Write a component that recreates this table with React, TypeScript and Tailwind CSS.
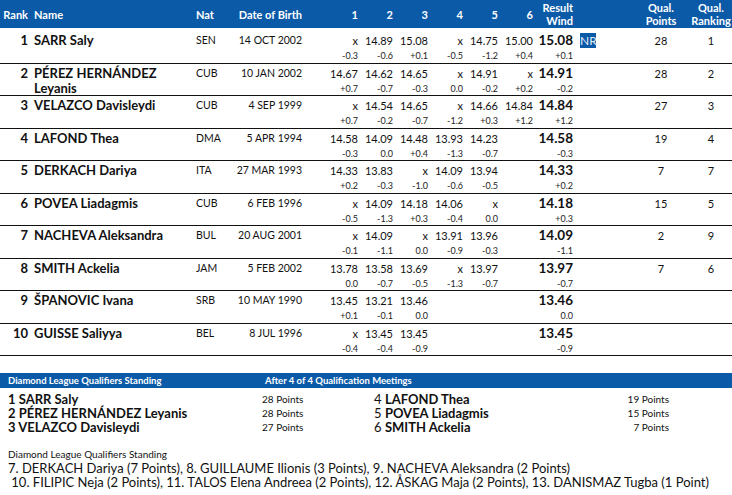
import React from "react";

type Row = {
  rank: number;
  name: string;
  nat: string;
  dob: string;
  marks: string[];
  winds: string[];
  result: string;
  wind: string;
  note?: string;
  points?: string;
  ranking?: string;
};

const rows: Row[] = [
  { rank: 1, name: "SARR Saly", nat: "SEN", dob: "14 OCT 2002", marks: ["x", "14.89", "15.08", "x", "14.75", "15.00"], winds: ["-0.3", "-0.6", "+0.1", "-0.5", "-1.2", "+0.4"], result: "15.08", wind: "+0.1", note: "NR", points: "28", ranking: "1" },
  { rank: 2, name: "PÉREZ HERNÁNDEZ Leyanis", nat: "CUB", dob: "10 JAN 2002", marks: ["14.67", "14.62", "14.65", "x", "14.91", "x"], winds: ["+0.7", "-0.7", "-0.3", "0.0", "-0.2", "+0.2"], result: "14.91", wind: "-0.2", points: "28", ranking: "2" },
  { rank: 3, name: "VELAZCO Davisleydi", nat: "CUB", dob: "4 SEP 1999", marks: ["x", "14.54", "14.65", "x", "14.66", "14.84"], winds: ["+0.7", "-0.2", "-0.7", "-1.2", "+0.3", "+1.2"], result: "14.84", wind: "+1.2", points: "27", ranking: "3" },
  { rank: 4, name: "LAFOND Thea", nat: "DMA", dob: "5 APR 1994", marks: ["14.58", "14.09", "14.48", "13.93", "14.23", ""], winds: ["-0.3", "0.0", "+0.4", "-1.3", "-0.7", ""], result: "14.58", wind: "-0.3", points: "19", ranking: "4" },
  { rank: 5, name: "DERKACH Dariya", nat: "ITA", dob: "27 MAR 1993", marks: ["14.33", "13.83", "x", "14.09", "13.94", ""], winds: ["+0.2", "-0.3", "-1.0", "-0.6", "-0.5", ""], result: "14.33", wind: "+0.2", points: "7", ranking: "7" },
  { rank: 6, name: "POVEA Liadagmis", nat: "CUB", dob: "6 FEB 1996", marks: ["x", "14.09", "14.18", "14.06", "x", ""], winds: ["-0.5", "-1.3", "+0.3", "-0.4", "0.0", ""], result: "14.18", wind: "+0.3", points: "15", ranking: "5" },
  { rank: 7, name: "NACHEVA Aleksandra", nat: "BUL", dob: "20 AUG 2001", marks: ["x", "14.09", "x", "13.91", "13.96", ""], winds: ["-0.1", "-1.1", "0.0", "-0.9", "-0.3", ""], result: "14.09", wind: "-1.1", points: "2", ranking: "9" },
  { rank: 8, name: "SMITH Ackelia", nat: "JAM", dob: "5 FEB 2002", marks: ["13.78", "13.58", "13.69", "x", "13.97", ""], winds: ["0.0", "-0.7", "-0.5", "-1.3", "-0.7", ""], result: "13.97", wind: "-0.7", points: "7", ranking: "6" },
  { rank: 9, name: "ŠPANOVIC Ivana", nat: "SRB", dob: "10 MAY 1990", marks: ["13.45", "13.21", "13.46", "", "", ""], winds: ["+0.1", "-0.1", "0.0", "", "", ""], result: "13.46", wind: "0.0" },
  { rank: 10, name: "GUISSE Saliyya", nat: "BEL", dob: "8 JUL 1996", marks: ["x", "13.45", "13.45", "", "", ""], winds: ["-0.4", "-0.4", "-0.9", "", "", ""], result: "13.45", wind: "-0.9" },
];

// widths of the six attempt columns
const markW = ["w-[56px]", "w-[35px]", "w-[35px]", "w-[35px]", "w-[35px]", "w-[35px]"];

const standingsLeft = [
  { n: "1", name: "SARR Saly", pts: "28 Points" },
  { n: "2", name: "PÉREZ HERNÁNDEZ Leyanis", pts: "28 Points" },
  { n: "3", name: "VELAZCO Davisleydi", pts: "27 Points" },
];
const standingsRight = [
  { n: "4", name: "LAFOND Thea", pts: "19 Points" },
  { n: "5", name: "POVEA Liadagmis", pts: "15 Points" },
  { n: "6", name: "SMITH Ackelia", pts: "7 Points" },
];

export default function App() {
  return (
    <div className="w-[732px] h-[495px] overflow-hidden bg-white text-[#111] font-['Lato','Liberation_Sans',sans-serif]">
      {/* header */}
      <div className="flex items-center h-[28px] bg-[#0b5aa8] text-white text-[11px] font-bold leading-[13px] whitespace-nowrap">
        <div className="w-[28px] text-right">Rank</div>
        <div className="w-[162px] ml-[6px]">Name</div>
        <div className="w-[40px]">Nat</div>
        <div className="w-[66px] text-right">Date of Birth</div>
        {["1", "2", "3", "4", "5", "6"].map((h, i) => (
          <div key={h} className={`${markW[i]} text-right`}>{h}</div>
        ))}
        <div className="w-[40px] text-right">
          <div>Result</div>
          <div>Wind</div>
        </div>
        <div className="w-[59px]" />
        <div className="w-[58px] text-center">
          <div>Qual.</div>
          <div>Points</div>
        </div>
        <div className="w-[42px] text-center">
          <div>Qual.</div>
          <div>Ranking</div>
        </div>
      </div>

      {/* results */}
      <div className="pt-[3px]">
        {rows.map((r) => (
          <div key={r.rank} className="flex h-[32.5px] pt-[2px] border-b-[1.5px] border-[#111] whitespace-nowrap">
            <div className="w-[28px] text-right text-[13px] font-bold leading-[15px]">{r.rank}</div>
            <div className="w-[162px] ml-[6px] text-[13px] font-bold leading-[15px] whitespace-normal">{r.name}</div>
            <div className="w-[40px] text-[10.5px] leading-[15px]">{r.nat}</div>
            <div className="w-[66px] text-right text-[10.5px] leading-[15px]">{r.dob}</div>
            {r.marks.map((m, i) => (
              <div key={i} className={`${markW[i]} text-right`}>
                <div className="h-[15px] text-[11px] leading-[15px]">{m}</div>
                <div className="h-[15px] text-[9px] leading-[15px] text-[#222]">{r.winds[i]}</div>
              </div>
            ))}
            <div className="w-[40px] text-right">
              <div className="h-[15px] text-[13.5px] font-bold leading-[15px]">{r.result}</div>
              <div className="h-[15px] text-[9px] leading-[15px] text-[#222]">{r.wind}</div>
            </div>
            <div className="w-[59px] pl-[7px]">
              {r.note && (
                <div className="h-[15px] w-[16px] text-center bg-[#0b5aa8] text-[#e3ecf7] text-[12px] leading-[15px]">{r.note}</div>
              )}
            </div>
            <div className="w-[58px] text-center text-[11px] leading-[15px]">{r.points}</div>
            <div className="w-[42px] text-center text-[11px] leading-[15px]">{r.ranking}</div>
          </div>
        ))}
      </div>

      {/* diamond league standing */}
      <div className="mt-[17px] flex h-[15px] bg-[#0b5aa8] text-white text-[9.5px] font-bold leading-[15px] whitespace-nowrap">
        <div className="w-[265px] pl-[8px]">Diamond League Qualifiers Standing</div>
        <div>After 4 of 4 Qualification Meetings</div>
      </div>
      <div className="mt-[4px] flex whitespace-nowrap">
        <div className="w-[374px] pl-[8px]">
          {standingsLeft.map((s) => (
            <div key={s.n} className="flex h-[14px] items-center">
              <div className="w-[254px] text-[13px] font-bold leading-[14px]">
                {s.n} {s.name}
              </div>
              <div className="text-[10px] leading-[14px]">{s.pts}</div>
            </div>
          ))}
        </div>
        <div>
          {standingsRight.map((s) => (
            <div key={s.n} className="flex h-[14px] items-center">
              <div className="w-[220px] text-[13px] leading-[14px]">
                {s.n} <span className="font-bold">{s.name}</span>
              </div>
              <div className="w-[75px] text-right text-[10px] leading-[14px]">{s.pts}</div>
            </div>
          ))}
        </div>
      </div>

      <div className="mt-[14px] pl-[8px] text-[10px] leading-[12px]">Diamond League Qualifiers Standing</div>
      <div className="mt-[1px] pl-[8px] text-[13px] leading-[14px] whitespace-nowrap">
        <div>7. DERKACH Dariya (7 Points), 8. GUILLAUME Ilionis (3 Points), 9. NACHEVA Aleksandra (2 Points)</div>
        <div>&nbsp;10. FILIPIC Neja (2 Points), 11. TALOS Elena Andreea (2 Points), 12. ÅSKAG Maja (2 Points), 13. DANISMAZ Tugba (1 Point)</div>
      </div>
    </div>
  );
}
